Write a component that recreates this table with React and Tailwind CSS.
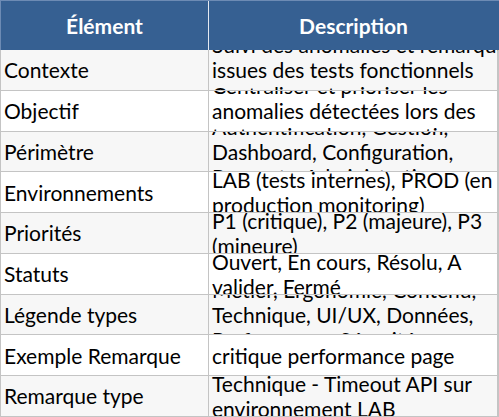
import React from "react";

const rows = [
  {
    label: "Contexte",
    lines: [
      "Suivi des anomalies et remarques",
      "issues des tests fonctionnels",
      "Centraliser et prioriser les",
    ],
  },
  {
    label: "Objectif",
    lines: [
      "Centraliser et prioriser les",
      "anomalies détectées lors des",
      "tests, suivre leur correction",
    ],
  },
  {
    label: "Périmètre",
    lines: [
      "Authentification, Gestion,",
      "Dashboard, Configuration,",
      "Rapports, Administration",
    ],
  },
  {
    label: "Environnements",
    lines: ["LAB (tests internes), PROD (en", "production monitoring)"],
  },
  {
    label: "Priorités",
    lines: ["P1 (critique), P2 (majeure), P3", "(mineure)"],
  },
  {
    label: "Statuts",
    lines: ["Ouvert, En cours, Résolu, A", "valider, Fermé"],
  },
  {
    label: "Légende types",
    lines: [
      "Métier, Ergonomie, Contenu,",
      "Technique, UI/UX, Données,",
      "Performance, Sécurité",
    ],
  },
  {
    label: "Exemple Remarque",
    lines: ["critique performance page"],
  },
  {
    label: "Remarque type",
    lines: ["Technique - Timeout API sur", "environnement LAB"],
  },
];

export default function App() {
  return (
    <div
      className="w-[499px] h-[417px] overflow-hidden bg-white text-black"
      style={{ fontFamily: "Lato, 'Liberation Sans', sans-serif" }}
    >
      <div className="grid grid-cols-[208px_289px] h-[50px] bg-[#366092] border-t border-l border-[#6d8bb4]">
        <div className="flex items-center justify-center border-r border-[#e4e9f1] text-white font-bold text-[21px]">
          Élément
        </div>
        <div className="flex items-center justify-center text-white font-bold text-[21px]">
          Description
        </div>
      </div>
      {rows.map((row, i) => (
        <div
          key={row.label}
          className={
            "grid grid-cols-[208px_289px] h-[40.75px] border-b border-l border-r-2 border-[#c4c4c4] w-[499px] " +
            (i % 2 === 0 ? "bg-[#f7f7f7]" : "bg-white")
          }
        >
          <div className="flex items-center pl-[3px] border-r border-[#c4c4c4] overflow-hidden text-[21px] leading-[25px] whitespace-nowrap">
            {row.label}
          </div>
          <div className="flex flex-col justify-center pl-[3px] overflow-hidden text-[21px] leading-[25px] whitespace-nowrap">
            {row.lines.map((line) => (
              <span key={line} className="block shrink-0">
                {line}
              </span>
            ))}
          </div>
        </div>
      ))}
    </div>
  );
}
